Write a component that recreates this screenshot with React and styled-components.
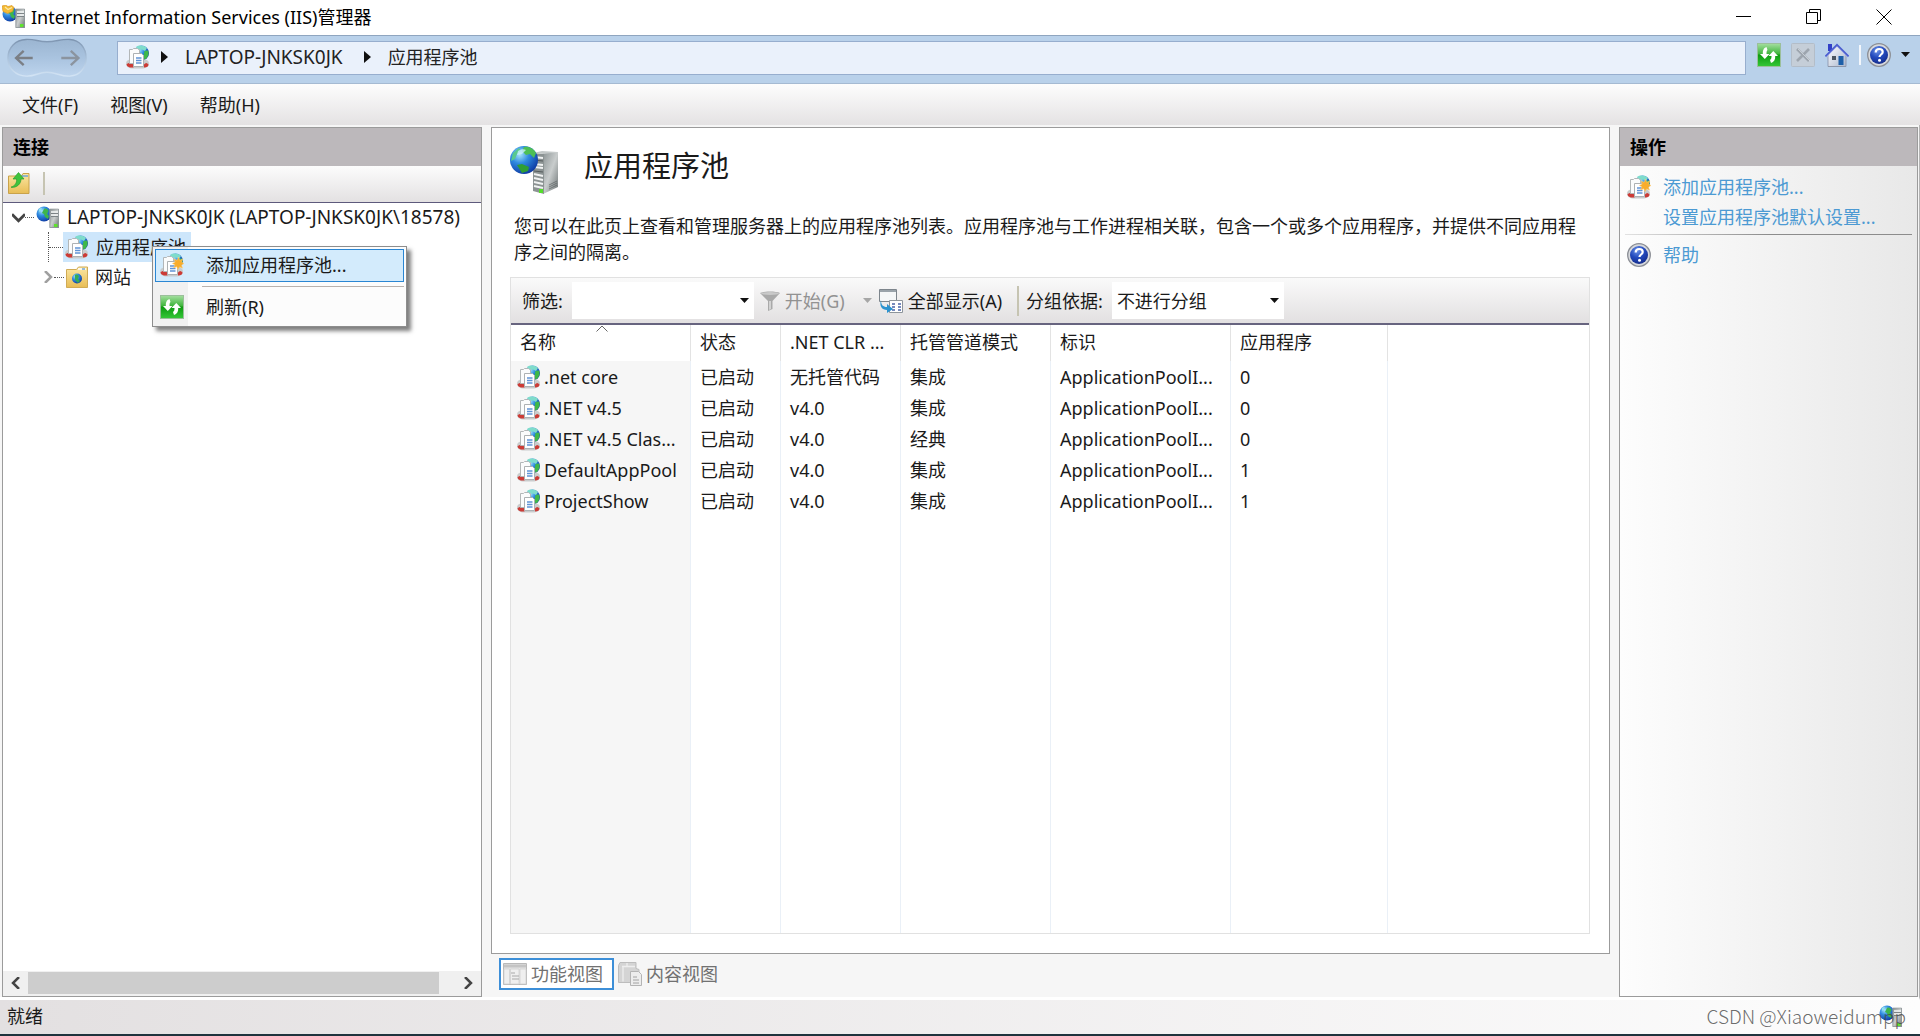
import { useState } from "react";
import styled, { createGlobalStyle } from "styled-components";

const GlobalStyle = createGlobalStyle`
  * {
    box-sizing: border-box;
  }

  body {
    margin: 0;
    background: #fff;
    color: #1a1a1a;
    font-family: "Noto Sans", "Noto Sans CJK SC", sans-serif;
    font-size: 18px;
    line-height: 26px;
  }

  button,
  input,
  select {
    font: inherit;
    color: inherit;
    margin: 0;
    padding: 0;
    border: none;
    background: none;
    outline: none;
  }

  a {
    text-decoration: none;
  }

  svg {
    display: block;
    flex: none;
  }
`;

/* ---------- icons ---------- */

const Defs = styled.svg`
  position: absolute;
`;

const SharedDefs = () => (
  <Defs width="0" height="0" aria-hidden="true">
    <defs>
      <radialGradient id="globe" cx="0.35" cy="0.3" r="0.8">
        <stop offset="0" stopColor="#a9e6fb" />
        <stop offset="0.4" stopColor="#2f8be0" />
        <stop offset="1" stopColor="#0a2f9a" />
      </radialGradient>
      <linearGradient id="steel" x1="0" x2="1" y1="0" y2="1">
        <stop offset="0" stopColor="#8d9596" />
        <stop offset="0.5" stopColor="#c9cdcd" />
        <stop offset="1" stopColor="#6c7374" />
      </linearGradient>
      <linearGradient id="green" x1="0" x2="0" y1="0" y2="1">
        <stop offset="0" stopColor="#a5dfa0" />
        <stop offset="0.45" stopColor="#3fb53c" />
        <stop offset="0.5" stopColor="#0e9a10" />
        <stop offset="1" stopColor="#35c838" />
      </linearGradient>
      <linearGradient id="folder" x1="0" x2="0" y1="0" y2="1">
        <stop offset="0" stopColor="#fbe7a4" />
        <stop offset="1" stopColor="#e8bd55" />
      </linearGradient>
      <radialGradient id="help" cx="0.4" cy="0.25" r="0.8">
        <stop offset="0" stopColor="#6d93e8" />
        <stop offset="0.5" stopColor="#2249bd" />
        <stop offset="1" stopColor="#132a88" />
      </radialGradient>
      <linearGradient id="house" x1="0" x2="1" y1="0" y2="1">
        <stop offset="0" stopColor="#ffffff" />
        <stop offset="1" stopColor="#aab6cc" />
      </linearGradient>
      <linearGradient id="pill" x1="0" x2="0" y1="0" y2="1">
        <stop offset="0" stopColor="#9bb5d1" />
        <stop offset="0.5" stopColor="#a9c3df" />
        <stop offset="1" stopColor="#bdd4ed" />
      </linearGradient>
      <linearGradient id="pillEdge" x1="0" x2="0" y1="0" y2="1">
        <stop offset="0" stopColor="#7d94b0" />
        <stop offset="0.5" stopColor="#a9c1da" />
        <stop offset="1" stopColor="#d3e4f5" />
      </linearGradient>
    </defs>
  </Defs>
);

const PoolIcon = ({ star }) => (
  <svg width="24" height="24" viewBox="0 0 24 24" aria-hidden="true">
    <circle cx="15.500" cy="8" r="7.500" fill="url(#globe)" />
    <path d="M10 2c3-2 8-2 11 1l-2 3-3-1.500-3 .5z" fill="#7fdccb" />
    <path d="M18.500 6l3.500-.5c1.500 3 0 7-3.500 9.500L17.500 11z" fill="#3fb848" />
    <path d="M0 18.500c0-2.500 2-4 5-4h13c3 0 5 1.500 5 4 0 3-3 4.800-6 5H7c-4 0-7-2-7-5z" fill="#c9cccd" />
    <path d="M.5 19.500c1.500-2 4.500-2 7 0v3c-4 .3-6.500-.5-7-3zM22.500 19.500c-1.500-2-3-2-4.500 0v3c3-.3 4.500-1 4.500-3z" fill="#cc3b36" />
    <path d="M3.500 4.500h3l1-1h4l1 1h1v14h-10z" fill="#fbfcfc" stroke="#b3b7b8" />
    <path d="M7.500 8.500h8l2 2V21.500H7.500z" fill="#fff" stroke="#adb1b3" />
    <path d="M10 13h5.500M10 15.500h5.500M10 18h5.500" stroke="#5f94d6" strokeWidth="1.300" />
    {star && (
      <path
        d="M18.500 4l1.200 3.300 3.200-1.400-1.300 3.200 2.400 1.400-2.600 1.500 1.200 3.200-3.100-1.300-1.500 2.800-1.300-3-3.200 1.200 1.500-3-2.600-1.500 2.800-1.300-1.300-3.100 3.200 1.300z"
        fill="#f9ad2c"
        stroke="#fcd184"
        strokeWidth="0.500"
      />
    )}
  </svg>
);

const ServerIcon = ({ badge }) => (
  <svg width="24" height="24" viewBox="0 0 24 24" aria-hidden="true">
    <circle cx="8" cy="9" r="7.500" fill="url(#globe)" />
    <path d="M8 4c2-1 4 0 4.500 2L11 9l2 2-1 3-3-2-1-3-2-1z" fill="#3db54c" />
    <path d="M3 4l3-1.500-1 3-2 1.500z" fill="#8fe3f0" />
    <path d="M13.500 4h9.500v19h-9.500z" fill="#9ba3a6" />
    <path d="M14 4h8.500v18.500H14z" fill="url(#steel)" stroke="#8a9295" strokeWidth="0.600" />
    <path d="M15 7h7M15 10h7" stroke="#f4f6f6" strokeWidth="1.400" />
    <path d="M15 8.500h7M15 11.500h7" stroke="#6c7477" strokeWidth="0.800" />
    <rect x="18" y="19" width="3.500" height="3" fill="#5fe32e" />
    {badge && (
      <path d="M0 1l3.500-1L6 1.500 10 .5l2 2-1.500 4-5 2-4.500-2z" fill="#f3bb35" stroke="#d98f1c" strokeWidth="0.600" />
    )}
    {badge && <path d="M3 2l3 2.500 4-2" fill="none" stroke="#fdeaa8" strokeWidth="1.200" />}
  </svg>
);

const LargeServerIcon = () => (
  <svg width="50" height="50" viewBox="0 0 50 50" aria-hidden="true">
    <path d="M33 8l15-1v35L33 49z" fill="url(#steel)" />
    <path d="M23 8l11 1v40l-11-3z" fill="#8c9393" />
    <path d="M23 8l9-2 16 1-14 2z" fill="#c3c8c8" />
    <path d="M24 12l9 1M24 19l9 1M24 22l9 1M24 29l9 2M24 33l9 2M24 37l9 2M24 41l9 2" stroke="#f1f3f3" strokeWidth="1.800" />
    <path d="M24 15l9 1M24 26l9 1" stroke="#565d5e" strokeWidth="1" />
    <path d="M39 40l8-4M39 42l8-4M39 44l8-4" stroke="#5c6263" strokeWidth="0.700" />
    <rect x="29" y="44" width="4" height="4" fill="#54dd2c" />
    <circle cx="14" cy="15" r="14" fill="url(#globe)" />
    <path d="M14 2c5-1 10 2 12 6l-2 5-4-4-4 1-4-4z" fill="#4cbf55" />
    <path d="M3 8l6-5 2 3-4 3-2 5-4 2z" fill="#59c98e" />
    <path d="M7 20l5-1 7 3-1 4-6 2z" fill="#2f9e35" />
    <path d="M8 6c3-2 6-2 8-1l-4 4-5 1z" fill="#c9f1fb" opacity="0.800" />
  </svg>
);

const RefreshIcon = () => (
  <svg width="24" height="24" viewBox="0 0 24 24" aria-hidden="true">
    <rect x="0.500" y="0.500" width="23" height="23" fill="url(#green)" stroke="#9bbf9b" />
    <path d="M9.500 4c-3 1-4 4-3.600 7H3l4.800 5 4.700-5H9.500c0-2 0-3 1-4z" fill="#fff" />
    <path d="M14 20c3-1 4.500-3.500 4.200-7H21l-4.700-5-4.800 5h3c0 2-.2 3-1.500 4z" fill="#fff" />
  </svg>
);

const StopIcon = () => (
  <svg width="24" height="24" viewBox="0 0 24 24" aria-hidden="true">
    <rect x="0.500" y="0.500" width="23" height="23" rx="1" fill="#c5ced8" stroke="#b3bdc8" />
    <path d="M6 6l12 12M18 6L6 18" stroke="#9da5ae" strokeWidth="2.600" />
    <path d="M7 6l12 12" stroke="#e6ebf0" strokeWidth="0.600" />
  </svg>
);

const HomeIcon = () => (
  <svg width="24" height="24" viewBox="0 0 24 24" aria-hidden="true">
    <path d="M3 1h4v7H3z" fill="#3240c8" />
    <path d="M3 11l9-8 9 8v12.500H3z" fill="url(#house)" stroke="#8691a8" strokeWidth="0.800" />
    <path d="M.5 13.500L12 2l11.500 11.500" fill="none" stroke="#4c5fd0" strokeWidth="2" />
    <path d="M1 14.500L12 3.500l11 11" fill="none" stroke="#c9d2f2" strokeWidth="0.600" />
    <rect x="7" y="13" width="4" height="4" fill="#4b5560" />
    <rect x="13.500" y="13" width="5" height="9" fill="#1d5fa8" />
    <path d="M3 23.500h18" stroke="#8d96a8" />
  </svg>
);

const HelpIcon = () => (
  <svg width="24" height="24" viewBox="0 0 24 24" aria-hidden="true">
    <circle cx="12" cy="12" r="11.300" fill="#d7d9dd" stroke="#8b8e95" strokeWidth="1.300" />
    <circle cx="12" cy="12" r="9" fill="url(#help)" />
    <path
      d="M8.700 9.500c0-2.200 1.500-3.500 3.500-3.500s3.500 1.200 3.500 3c0 2.500-3.200 2.500-3.200 5"
      fill="none"
      stroke="#fff"
      strokeWidth="2.200"
    />
    <circle cx="12.500" cy="17.200" r="1.500" fill="#fff" />
  </svg>
);

const UpFolderIcon = () => (
  <svg width="22" height="22" viewBox="0 0 22 22" aria-hidden="true">
    <path d="M.5 4h13l1.500-2.500h6V21.500H.5z" fill="url(#folder)" stroke="#c9a24a" />
    <path d="M14 4h6" stroke="#6fa6d8" strokeWidth="1.500" />
    <path d="M3 15c4-1 6-4 5.500-8H5l5.500-6.500L16 7h-3c0 5-4 8.500-9.500 8.500z" fill="#3fc43c" stroke="#2d9d30" strokeWidth="0.700" />
  </svg>
);

const SitesIcon = () => (
  <svg width="22" height="22" viewBox="0 0 22 22" aria-hidden="true">
    <path d="M.5 3.500h10l2-2.500h9v20.500H.5z" fill="url(#folder)" stroke="#d0ab55" />
    <path d="M12 3h8" stroke="#fff" strokeWidth="1.500" />
    <path d="M16 3h3" stroke="#6fa6d8" strokeWidth="1.500" />
    <circle cx="11" cy="12.500" r="5" fill="url(#globe)" />
    <path d="M9 9c2-1 3 0 4 1l-1 3 2 2-2 2-3-3z" fill="#35ad55" />
  </svg>
);

const FunnelIcon = () => (
  <svg width="20" height="20" viewBox="0 0 20 20" aria-hidden="true">
    <path d="M0 2c4-2 16-2 20 0l-7.500 8v8L8 20V10z" fill="#a9a9a9" />
    <ellipse cx="10" cy="2.500" rx="9" ry="1.500" fill="#c9c9c9" />
    <path d="M9 10h2v8l-2 1z" fill="#d2d2d2" />
  </svg>
);

const ShowAllIcon = () => (
  <svg width="24" height="24" viewBox="0 0 24 24" aria-hidden="true">
    <path d="M.5.5h17v12H.5z" fill="#f5f7f8" stroke="#7d858c" />
    <path d="M1 2h16" stroke="#9aa3aa" strokeWidth="2" />
    <path d="M10.500 11.500h13v12h-13z" fill="#fff" stroke="#8d949b" />
    <path d="M13 15h3M19 15h3M13 18h3M19 18h3M13 21h3M19 21h3" stroke="#4a63a8" strokeWidth="1.500" />
    <path d="M2 11c0 5 2 7 6 7v-3l6 5-6 4v-3c-5 0-8-4-6-10z" fill="#2b93cf" />
  </svg>
);

const FeaturesIcon = () => (
  <svg width="24" height="22" viewBox="0 0 24 22" aria-hidden="true">
    <path d="M.5.5h23v21H.5z" fill="#e4e4e4" stroke="#b9b9b9" />
    <path d="M1 3h22" stroke="#c4c4c4" strokeWidth="3" />
    <path d="M1 6h5.500v15H1zM7.500 6H16v15H7.500zM17 6h6v15h-6z" fill="#efefef" stroke="#cfcfcf" strokeWidth="0.700" />
    <path d="M8 10h4M9 13h7M9 16h7" stroke="#a9a9a9" />
  </svg>
);

const ContentIcon = () => (
  <svg width="24" height="24" viewBox="0 0 24 24" aria-hidden="true">
    <path d="M.5 3.500L2 .5h16v6l3 1v13H.5z" fill="#d4d4d4" stroke="#bdbdbd" />
    <path d="M4 4.500h13M5 4.500v15M9 1v4" stroke="#eee" strokeWidth="1.300" />
    <path d="M12.500 9.500h8l3 3v11h-11z" fill="#ededed" stroke="#b4b4b4" />
    <path d="M15 15h4M15 18h6M15 21h6" stroke="#a2a2a2" />
  </svg>
);

const NavPill = () => (
  <svg width="82" height="40" viewBox="0 0 84 42" aria-hidden="true">
    <path
      d="M20 1.500C30 1 32 4 42 4s14-3 24-2.500C76 2 83 10 83 21s-7 18.500-17 19c-10 .5-14-4-24-4s-12 4.500-22 4C9 39.500 1 32 1 21S9 2 20 1.500z"
      fill="url(#pill)"
      stroke="url(#pillEdge)"
      strokeWidth="1.500"
    />
    <path d="M27 21H10M17.500 13.500L9.500 21l8 7.500" fill="none" stroke="#7b7f85" strokeWidth="2.500" />
    <path d="M57 21h18M67 13.500l8 7.500-8 7.500" fill="none" stroke="#8b949f" strokeWidth="2.500" />
  </svg>
);

const Triangle = () => (
  <svg width="7" height="12" viewBox="0 0 7 12" aria-hidden="true">
    <path d="M0 0l7 6-7 6z" fill="#111" />
  </svg>
);

const Caret = ({ color = "#111" }) => (
  <svg width="9" height="5" viewBox="0 0 9 5" aria-hidden="true">
    <path d="M0 0h9L4.500 5z" fill={color} />
  </svg>
);

const Chevron = ({ points, color = "#444", size = 12 }) => (
  <svg width={size} height={size} viewBox="0 0 12 12" aria-hidden="true">
    <polyline points={points} fill="none" stroke={color} strokeWidth="2.500" />
  </svg>
);

/* ---------- window frame ---------- */

const Window = styled.div`
  display: flex;
  flex-direction: column;
  min-height: 100vh;
  background: #f6f6f6;
  border-bottom: 2px solid #1f333d;
`;

const TitleBar = styled.header`
  display: flex;
  align-items: center;
  height: 35px;
  padding: 0 4px 2px 2px;
  gap: 5px;
  background: #fff;
  color: #000;
`;

const TitleText = styled.h1`
  flex: 1;
  margin: 0;
  font-size: 18px;
  font-weight: 400;
`;

const CaptionButton = styled.button`
  display: flex;
  align-items: center;
  justify-content: center;
  width: 65px;
  height: 32px;
`;

const NavBar = styled.nav`
  display: flex;
  align-items: center;
  height: 49px;
  padding: 0 10px 4px 6px;
  border-top: 1px solid #8fa5bf;
  border-bottom: 1px solid #a5bad2;
  background: #b9d1ea;
`;

const PillButton = styled.button`
  margin-right: 29px;
`;

const AddressBox = styled.div`
  display: flex;
  align-items: center;
  flex: 1;
  height: 34px;
  padding: 0 0 2px 8px;
  gap: 11px;
  border: 1px solid #97aece;
  background: #eaf1fb;
`;

const Crumb = styled.a`
  margin: 0 10px 0 6px;
  color: #222;
`;

const ServerName = styled.span`
  font-size: 19px;
`;

const NavTools = styled.div`
  display: flex;
  align-items: center;
  gap: 10px;
  margin-left: 11px;
  padding-bottom: 6px;
`;

const NavDivider = styled.span`
  width: 2px;
  height: 20px;
  margin-right: -4px;
  background: #f3f7fc;
`;

const MenuBar = styled.div`
  display: flex;
  align-items: center;
  height: 41px;
  padding-left: 22px;
  gap: 32px;
  background: linear-gradient(#fdfdfd, #e4e2e3);
`;

const Workspace = styled.main`
  display: flex;
  flex: 1;
  gap: 9px;
  padding: 2px 1px 0 2px;
  border-right: 1px solid #b5b5b5;
  border-bottom: 3px solid #fff;
`;

const Panel = styled.section`
  display: flex;
  flex-direction: column;
  flex: none;
  width: ${(props) => props.$width};
  border: 1px solid #9b9b9b;
  background: ${(props) => props.$background || "#fff"};
`;

const PanelTitle = styled.h2`
  height: 38px;
  margin: 0;
  padding-left: 10px;
  background: #bcb8bb;
  color: #000;
  font-size: 18px;
  font-weight: 600;
  line-height: 38px;
`;

/* ---------- connections tree ---------- */

const TreeToolbar = styled.div`
  display: flex;
  align-items: center;
  height: 37px;
  padding: 0 0 2px 5px;
  gap: 13px;
  border-bottom: 1px solid #5d5a7c;
  background: linear-gradient(#fcfcfc, #e3e1e2);
`;

const Separator = styled.span`
  width: 2px;
  height: ${(props) => props.$height};
  background: #c6c4b2;
`;

const Tree = styled.ul`
  flex: 1;
  margin: 0;
  padding: 0;
  list-style: none;
`;

const SubTree = styled.ul`
  margin: 0;
  padding: 0;
  list-style: none;
`;

const TreeRow = styled.div`
  position: relative;
  display: flex;
  align-items: center;
  height: 30px;
  padding: 0 0 2px ${(props) => props.$indent};
  white-space: nowrap;
`;

const Dots = styled.span`
  width: ${(props) => props.$width};
  border-top: 1px dotted #555;
`;

const Branch = styled.span`
  height: 30px;
  border-left: 1px dotted #555;
`;

const TreeLabel = styled.span`
  display: flex;
  align-items: center;
  height: 30px;
  gap: 7px;
  padding: 0 5px 0 2px;
  background: ${(props) => (props.$selected ? "#cde6fb" : "transparent")};
`;

const ContextMenu = styled.div`
  position: absolute;
  z-index: 2;
  top: 13px;
  left: 149px;
  width: 255px;
  height: 81px;
  padding: 2px;
  border: 1px solid #8d8d8d;
  background: linear-gradient(90deg, #f1f1f1 35px, #fcfcfc 35px);
  box-shadow: 4px 4px 4px rgba(0, 0, 0, 0.5);
`;

const ContextItem = styled.button`
  display: flex;
  align-items: center;
  width: 100%;
  height: 33px;
  padding: 0 0 2px 4px;
  gap: 22px;
  border: 1px solid ${(props) => (props.$active ? "#2a86d3" : "transparent")};
  background: ${(props) => (props.$active ? "#d3ebfc" : "transparent")};
`;

const ContextLine = styled.hr`
  margin: 4px 0 4px 47px;
  border: none;
  border-top: 1px solid #b8b2ae;
`;

const ScrollBar = styled.div`
  display: flex;
  align-items: center;
  justify-content: space-between;
  height: 25px;
  padding: 0 7px 2px;
  gap: 6px;
  background: #f0f0f0;
`;

const ScrollTrack = styled.div`
  flex: 1;
  height: 22px;
`;

const ScrollThumb = styled.div`
  width: 96%;
  height: 100%;
  background: #cdcdcd;
`;

/* ---------- feature view ---------- */

const Center = styled.div`
  display: flex;
  flex-direction: column;
  flex: 1;
  min-width: 0;
`;

const Feature = styled.section`
  display: flex;
  flex-direction: column;
  flex: 1;
  padding: 17px 19px 19px 18px;
  border: 1px solid #9b9b9b;
  background: #fff;
`;

const FeatureHeader = styled.div`
  display: flex;
  align-items: center;
  gap: 24px;
`;

const FeatureTitle = styled.h2`
  margin: 0;
  padding-bottom: 8px;
  font-size: 29px;
  font-weight: 400;
  line-height: 40px;
`;

const Description = styled.p`
  margin: 18px 8px 12px 4px;
`;

const ListBox = styled.div`
  display: flex;
  flex-direction: column;
  flex: 1;
  border: 1px solid #e1e1e1;
`;

const FilterBar = styled.div`
  display: flex;
  align-items: center;
  height: 47px;
  padding-left: 11px;
  border-bottom: 2px solid #67647f;
  background: linear-gradient(#fafafa, #e2e0e1);
  white-space: nowrap;
`;

const Combo = styled.div`
  display: flex;
  align-items: center;
  width: ${(props) => props.$width};
  height: 37px;
  margin: 0 6px 0 9px;
  padding-right: 5px;
  background: #fff;

  input,
  select {
    flex: 1;
    min-width: 0;
    height: 37px;
    padding-left: 5px;
    appearance: none;
  }
`;

const ToolButton = styled.button`
  display: flex;
  align-items: center;
  gap: 5px;
  margin-right: ${(props) => props.$after};
  color: ${(props) => (props.disabled ? "#929292" : "#1a1a1a")};
`;

const GroupLabel = styled.label`
  margin-left: 7px;
`;

const TableWrap = styled.div`
  display: grid;
  flex: 1;
`;

const Table = styled.table`
  width: 100%;
  height: 100%;
  table-layout: fixed;
  border-collapse: separate;
  border-spacing: 0;
`;

const HeadCell = styled.th`
  position: relative;
  height: 36px;
  padding: 0 9px 2px;
  border-right: 1px solid #e3e3e3;
  font-weight: 400;
  text-align: left;
  white-space: nowrap;

  &:last-child {
    border-right: none;
  }
`;

const SortMark = styled.svg`
  position: absolute;
  top: 0;
  left: 85px;
`;

const Cell = styled.td`
  height: ${(props) => (props.$filler ? "auto" : "31px")};
  padding: 0 9px;
  border-right: 1px solid #eaf0f7;
  white-space: nowrap;

  &:first-child {
    padding: 0 4px 0 6px;
    background: #f6f6f6;
  }

  &:last-child {
    border-right: none;
  }
`;

const NameCell = styled.div`
  display: flex;
  align-items: center;
  gap: 3px;
`;

const ViewTabs = styled.div`
  display: flex;
  align-items: center;
  height: 43px;
  padding: 0 8px 4px;
`;

const ViewTab = styled.button`
  display: flex;
  align-items: center;
  height: 32px;
  padding: 0 9px 0 2px;
  gap: 4px;
  border: 2px solid ${(props) => (props.$active ? "#3d8fd8" : "transparent")};
  background: ${(props) => (props.$active ? "#fff" : "transparent")};
  color: #717171;
`;

/* ---------- actions and status ---------- */

const ActionList = styled.div`
  padding: 6px 5px;
`;

const ActionLink = styled.a`
  display: flex;
  align-items: center;
  height: 30px;
  padding-left: ${(props) => (props.$plain ? "38px" : "2px")};
  gap: 12px;
  color: #4c9ad3;
  white-space: nowrap;
`;

const ActionLine = styled.hr`
  height: 1px;
  margin: 2px 0 5px;
  border: none;
  background: linear-gradient(90deg, #e2e2e2, #8c8c8c 50%);
`;

const StatusBar = styled.footer`
  position: relative;
  display: flex;
  align-items: center;
  justify-content: space-between;
  height: 34px;
  padding: 0 17px 2px 7px;
  background: linear-gradient(90deg, #e3e0e1, #fdfdfd);
`;

const Watermark = styled.span`
  position: absolute;
  right: 14px;
  color: rgba(70, 70, 70, 0.8);
  font-family: "Noto Sans CJK SC", sans-serif;
  font-size: 19px;
  font-weight: 300;
`;

const pools = [
  [".net core", "已启动", "无托管代码", "集成", "ApplicationPoolI...", "0"],
  [".NET v4.5", "已启动", "v4.0", "集成", "ApplicationPoolI...", "0"],
  [".NET v4.5 Clas...", "已启动", "v4.0", "经典", "ApplicationPoolI...", "0"],
  ["DefaultAppPool", "已启动", "v4.0", "集成", "ApplicationPoolI...", "1"],
  ["ProjectShow", "已启动", "v4.0", "集成", "ApplicationPoolI...", "1"],
];

const columns = [
  { title: "名称", width: 180 },
  { title: "状态", width: 90 },
  { title: ".NET CLR ...", width: 120 },
  { title: "托管管道模式", width: 150 },
  { title: "标识", width: 180 },
  { title: "应用程序", width: 157 },
  { title: "" },
];

function App() {
  const [filter, setFilter] = useState("");

  return (
    <Window>
      <GlobalStyle />
      <SharedDefs />
      <TitleBar>
        <ServerIcon badge />
        <TitleText>Internet Information Services (IIS)管理器</TitleText>
        <CaptionButton aria-label="最小化">
          <svg width="16" height="16" viewBox="0 0 16 16">
            <path d="M0 7.500h15" stroke="#000" />
          </svg>
        </CaptionButton>
        <CaptionButton aria-label="还原">
          <svg width="16" height="16" viewBox="0 0 16 16">
            <path d="M.5 3.500h11v11H.5zM3.500 3.500v-3h11v11h-3" fill="none" stroke="#000" />
          </svg>
        </CaptionButton>
        <CaptionButton aria-label="关闭">
          <svg width="16" height="16" viewBox="0 0 16 16">
            <path d="M.5.5l15 15M15.500.5l-15 15" stroke="#000" />
          </svg>
        </CaptionButton>
      </TitleBar>

      <NavBar>
        <PillButton aria-label="后退">
          <NavPill />
        </PillButton>
        <AddressBox>
          <PoolIcon />
          <Triangle />
          <Crumb href="#server">
            <ServerName>LAPTOP-JNKSK0JK</ServerName>
          </Crumb>
          <Triangle />
          <Crumb href="#pools">应用程序池</Crumb>
        </AddressBox>
        <NavTools>
          <button aria-label="刷新">
            <RefreshIcon />
          </button>
          <button aria-label="停止">
            <StopIcon />
          </button>
          <button aria-label="主页">
            <HomeIcon />
          </button>
          <NavDivider />
          <button aria-label="帮助">
            <HelpIcon />
          </button>
          <Caret />
        </NavTools>
      </NavBar>

      <MenuBar>
        <button>文件(F)</button>
        <button>视图(V)</button>
        <button>帮助(H)</button>
      </MenuBar>

      <Workspace>
        <Panel $width="480px">
          <PanelTitle>连接</PanelTitle>
          <TreeToolbar>
            <button aria-label="向上">
              <UpFolderIcon />
            </button>
            <Separator $height="23px" />
          </TreeToolbar>
          <Tree>
            <li>
              <TreeRow $indent="9px">
                <Chevron points="0,3 6,9 12,3" size={13} />
                <Dots $width="9px" />
                <TreeLabel>
                  <ServerIcon />
                  <ServerName>LAPTOP-JNKSK0JK (LAPTOP-JNKSK0JK\18578)</ServerName>
                </TreeLabel>
              </TreeRow>
              <SubTree>
                <li>
                  <TreeRow $indent="45px">
                    <Branch />
                    <Dots $width="14px" />
                    <TreeLabel $selected>
                      <PoolIcon />
                      应用程序池
                    </TreeLabel>
                    <ContextMenu>
                      <ContextItem $active>
                        <PoolIcon star />
                        添加应用程序池...
                      </ContextItem>
                      <ContextLine />
                      <ContextItem>
                        <RefreshIcon />
                        刷新(R)
                      </ContextItem>
                    </ContextMenu>
                  </TreeRow>
                </li>
                <li>
                  <TreeRow $indent="39px">
                    <Chevron points="3,0 9,6 3,12" color="#a0a0a0" />
                    <Dots $width="10px" />
                    <TreeLabel>
                      <SitesIcon />
                      网站
                    </TreeLabel>
                  </TreeRow>
                </li>
              </SubTree>
            </li>
          </Tree>
          <ScrollBar>
            <Chevron points="9,0 3,6 9,12" />
            <ScrollTrack>
              <ScrollThumb />
            </ScrollTrack>
            <Chevron points="3,0 9,6 3,12" />
          </ScrollBar>
        </Panel>

        <Center>
          <Feature>
            <FeatureHeader>
              <LargeServerIcon />
              <FeatureTitle>应用程序池</FeatureTitle>
            </FeatureHeader>
            <Description>
              您可以在此页上查看和管理服务器上的应用程序池列表。应用程序池与工作进程相关联，包含一个或多个应用程序，并提供不同应用程序之间的隔离。
            </Description>
            <ListBox>
              <FilterBar>
                <label htmlFor="filter">筛选:</label>
                <Combo $width="182px">
                  <input id="filter" value={filter} onChange={(e) => setFilter(e.target.value)} />
                  <Caret />
                </Combo>
                <ToolButton disabled $after="18px">
                  <FunnelIcon />
                  开始(G)
                </ToolButton>
                <ToolButton disabled aria-label="开始选项" $after="7px">
                  <Caret color="#a6a6a6" />
                </ToolButton>
                <ToolButton $after="15px">
                  <ShowAllIcon />
                  全部显示(A)
                </ToolButton>
                <Separator $height="30px" />
                <GroupLabel htmlFor="group">分组依据:</GroupLabel>
                <Combo $width="172px">
                  <select id="group">
                    <option>不进行分组</option>
                  </select>
                  <Caret />
                </Combo>
              </FilterBar>
              <TableWrap>
                <Table>
                  <colgroup>
                    {columns.map((column, i) => (
                      <col key={i} width={column.width} />
                    ))}
                  </colgroup>
                  <thead>
                    <tr>
                      {columns.map((column, i) => (
                        <HeadCell key={i}>
                          {column.title}
                          {i === 0 && (
                            <SortMark width="12" height="7" viewBox="0 0 12 7">
                              <path d="M.5 6.500L6 1l5.500 5.500" fill="none" stroke="#666" />
                            </SortMark>
                          )}
                        </HeadCell>
                      ))}
                    </tr>
                  </thead>
                  <tbody>
                    {pools.map(([name, ...values]) => (
                      <tr key={name}>
                        <Cell>
                          <NameCell>
                            <PoolIcon />
                            <span>{name}</span>
                          </NameCell>
                        </Cell>
                        {values.map((value, i) => (
                          <Cell key={i}>{value}</Cell>
                        ))}
                        <Cell />
                      </tr>
                    ))}
                    <tr>
                      {columns.map((column, i) => (
                        <Cell key={i} $filler />
                      ))}
                    </tr>
                  </tbody>
                </Table>
              </TableWrap>
            </ListBox>
          </Feature>
          <ViewTabs>
            <ViewTab $active>
              <FeaturesIcon />
              功能视图
            </ViewTab>
            <ViewTab>
              <ContentIcon />
              内容视图
            </ViewTab>
          </ViewTabs>
        </Center>

        <Panel $width="299px" $background="linear-gradient(90deg, #fdfdfd, #e8e8e8)">
          <PanelTitle>操作</PanelTitle>
          <ActionList>
            <ActionLink href="#add">
              <PoolIcon star />
              添加应用程序池...
            </ActionLink>
            <ActionLink href="#defaults" $plain>
              设置应用程序池默认设置...
            </ActionLink>
            <ActionLine />
            <ActionLink href="#help">
              <HelpIcon />
              帮助
            </ActionLink>
          </ActionList>
        </Panel>
      </Workspace>

      <StatusBar>
        <span>就绪</span>
        <ServerIcon />
        <Watermark>CSDN @Xiaoweidumpp</Watermark>
      </StatusBar>
    </Window>
  );
}

export default App;
